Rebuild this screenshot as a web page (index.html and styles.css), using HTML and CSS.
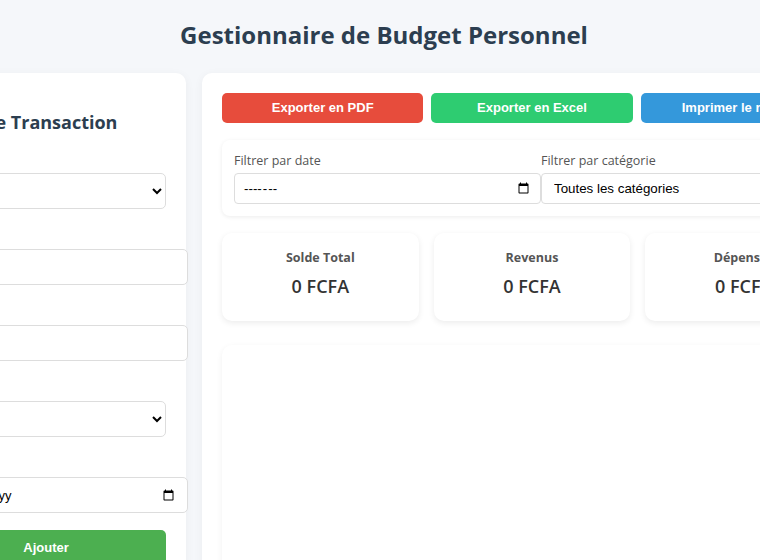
FILE: index.html
```html
<!DOCTYPE html>
<html lang="fr">
<head>
    <meta charset="UTF-8">
    <meta name="viewport" content="width=device-width, initial-scale=1.0">
    <title>Gestionnaire de Budget Personnel</title>
    <link rel="stylesheet" href="styles.css">
</head>
<body>
    <h1>Gestionnaire de Budget Personnel</h1>

    <div class="layout">
        <div class="panel form-panel">
            <h2>Nouvelle Transaction</h2>
            <form id="transactionForm">
                <div class="form-group">
                    <label for="type">Type</label>
                    <select id="type">
                        <option value="revenu">Revenu</option>
                        <option value="depense">Dépense</option>
                    </select>
                </div>
                <div class="form-group">
                    <label for="amount">Montant</label>
                    <input type="number" id="amount">
                </div>
                <div class="form-group">
                    <label for="description">Description</label>
                    <input type="text" id="description">
                </div>
                <div class="form-group">
                    <label for="category">Catégorie</label>
                    <select id="category">
                        <option>Salaire</option>
                        <option>Alimentation</option>
                        <option>Transport</option>
                        <option>Logement</option>
                        <option>Loisirs</option>
                        <option>Autre</option>
                    </select>
                </div>
                <div class="form-group">
                    <label for="date">Date</label>
                    <input type="date" id="date">
                </div>
                <button type="submit" class="btn-add">Ajouter</button>
            </form>
        </div>

        <div class="panel main-panel">
            <div class="actions">
                <button class="btn-pdf">Exporter en PDF</button>
                <button class="btn-excel">Exporter en Excel</button>
                <button class="btn-print">Imprimer le rapport</button>
            </div>

            <div class="filters">
                <div>
                    <label for="filterDate">Filtrer par date</label>
                    <input type="month" id="filterDate">
                </div>
                <div>
                    <label for="filterCategory">Filtrer par catégorie</label>
                    <select id="filterCategory">
                        <option>Toutes les catégories</option>
                        <option>Salaire</option>
                        <option>Alimentation</option>
                        <option>Transport</option>
                        <option>Logement</option>
                        <option>Loisirs</option>
                        <option>Autre</option>
                    </select>
                </div>
            </div>

            <div class="stats">
                <div class="stat-card">
                    <h3>Solde Total</h3>
                    <div class="stat-value" id="balance">0 FCFA</div>
                </div>
                <div class="stat-card">
                    <h3>Revenus</h3>
                    <div class="stat-value" id="income">0 FCFA</div>
                </div>
                <div class="stat-card">
                    <h3>Dépenses</h3>
                    <div class="stat-value" id="expenses">0 FCFA</div>
                </div>
            </div>

            <div class="chart-card">
                <canvas id="chart"></canvas>
            </div>
        </div>
    </div>
</body>
</html>
```

FILE: styles.css
```css
body {
    font-family: 'Open Sans', 'Segoe UI', Tahoma, sans-serif;
    margin: 0;
    padding: 20px 20px 20px 28px;
    background: #f5f7fa;
    color: #333;
}

h1 {
    text-align: center;
    color: #2c3e50;
    font-size: 24px;
    line-height: 30px;
    margin: 0 0 23px;
}

.layout {
    display: flex;
    justify-content: center;
    gap: 16px;
}

.panel {
    background: white;
    border-radius: 10px;
    padding: 20px;
    box-shadow: 0 2px 10px rgba(0, 0, 0, 0.05);
}

.form-panel {
    flex: 0 0 240px;
}

.main-panel {
    flex: 0 0 620px;
}

.form-panel h2 {
    font-size: 18px;
    line-height: 24px;
    color: #2c3e50;
    margin: 17px 0 16px;
}

.form-group {
    margin-bottom: 17px;
}

.form-group label {
    display: block;
    font-size: 13px;
    line-height: 18px;
    margin-bottom: 5px;
    color: #555;
}

input, select, button {
    font-family: 'Liberation Sans', Arial, sans-serif;
}

.form-group input,
.form-group select {
    width: 100%;
    padding: 10px;
    border: 1px solid #ddd;
    border-radius: 5px;
    font-size: 13px;
    background: white;
}

.form-group input {
    height: 14px;
}

.form-group select {
    height: 36px;
}

.btn-add {
    width: 100%;
    padding: 10px;
    background: #4caf50;
    color: white;
    border: none;
    border-radius: 5px;
    font-size: 13px;
    font-weight: bold;
    line-height: 16px;
}

.actions {
    display: flex;
    gap: 8px;
    margin-bottom: 17px;
}

.actions button {
    flex: 1;
    padding: 8px;
    border: none;
    border-radius: 5px;
    color: white;
    font-size: 13px;
    font-weight: bold;
    line-height: 14px;
}

.btn-pdf { background: #e74c3c; }
.btn-excel { background: #2ecc71; }
.btn-print { background: #3498db; }

.filters {
    display: grid;
    grid-template-columns: 1fr 1fr;
    gap: 18px;
    padding: 12px;
    border-radius: 8px;
    box-shadow: 0 1px 4px rgba(0, 0, 0, 0.08);
    margin-bottom: 17px;
}

.filters label {
    display: block;
    font-size: 12.5px;
    line-height: 17px;
    margin-bottom: 4px;
    color: #555;
}

.filters input,
.filters select {
    width: 100%;
    padding: 6px 8px;
    border: 1px solid #ddd;
    border-radius: 4px;
    font-size: 13.33px;
    background: white;
}

.stats {
    display: grid;
    grid-template-columns: repeat(3, 1fr);
    gap: 15px;
    margin-bottom: 24px;
}

.stat-card {
    background: white;
    border-radius: 10px;
    padding: 16px 20px 23px;
    text-align: center;
    box-shadow: 0 2px 6px rgba(0, 0, 0, 0.08);
}

.stat-card h3 {
    font-size: 12.5px;
    line-height: 17px;
    margin: 0 0 8px;
    color: #555;
}

.stat-value {
    font-size: 18px;
    line-height: 24px;
    font-weight: 600;
    color: #333;
}

.chart-card {
    background: white;
    border-radius: 10px;
    padding: 20px;
    height: 300px;
    box-shadow: 0 2px 6px rgba(0, 0, 0, 0.06);
}
```
